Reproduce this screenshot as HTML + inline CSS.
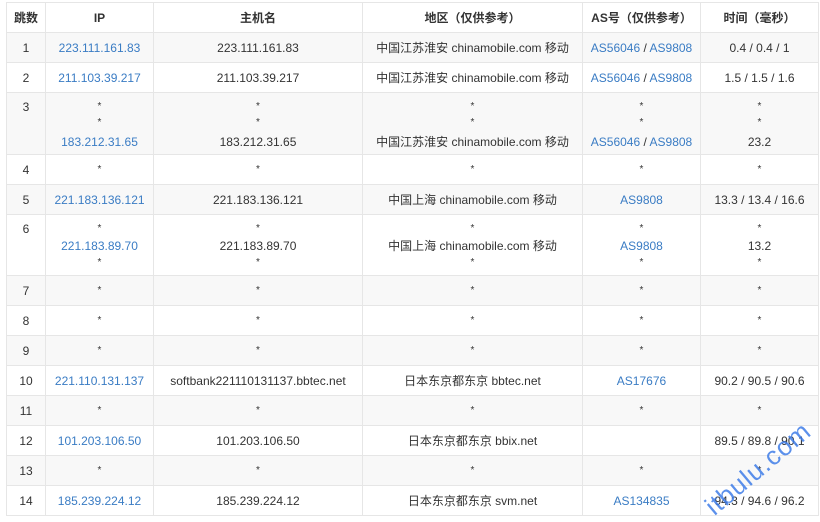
<!DOCTYPE html>
<html><head><meta charset="utf-8">
<style>
body{margin:0;background:#fff;width:820px;height:521px;overflow:hidden;position:relative;font-family:"Liberation Sans","Noto Sans CJK SC",sans-serif;}
table{position:absolute;left:6px;top:2px;border-collapse:collapse;font-size:12px;color:#333;table-layout:fixed;}
td,th{border:1px solid #e6e6e6;text-align:center;padding:0;height:29px;}
th{font-weight:bold;height:29px;}
tr:nth-child(even) td{background:#f8f8f8;}
a{color:#3a7cc4;text-decoration:none;}
.m td{vertical-align:top;padding-top:6px;}
.m td div{height:16px;line-height:16px;}
.m td div.t{height:18px;line-height:18px;}
.r3 td div.t{height:22px;line-height:22px;}
.s{font-size:10px;}
.wm{position:absolute;left:699px;top:498px;font-size:26px;color:#3f7de8;opacity:.85;transform:rotate(-40deg);transform-origin:left top;white-space:nowrap;letter-spacing:1px;}
</style></head><body>
<table>
<colgroup><col style="width:39px"><col style="width:108px"><col style="width:209px"><col style="width:220px"><col style="width:118px"><col style="width:118px"></colgroup>
<tr><th>跳数</th><th>IP</th><th>主机名</th><th>地区（仅供参考）</th><th>AS号（仅供参考）</th><th>时间（毫秒）</th></tr>
<tr><td>1</td><td><a>223.111.161.83</a></td><td>223.111.161.83</td><td>中国江苏淮安 chinamobile.com 移动</td><td><a>AS56046</a> / <a>AS9808</a></td><td>0.4 / 0.4 / 1</td></tr>
<tr><td>2</td><td><a>211.103.39.217</a></td><td>211.103.39.217</td><td>中国江苏淮安 chinamobile.com 移动</td><td><a>AS56046</a> / <a>AS9808</a></td><td>1.5 / 1.5 / 1.6</td></tr>
<tr class="m r3" style="height:62px"><td><div>3</div></td><td><div class="s">*</div><div class="s">*</div><div class="t"><a>183.212.31.65</a></div></td><td><div class="s">*</div><div class="s">*</div><div class="t">183.212.31.65</div></td><td><div class="s">*</div><div class="s">*</div><div class="t">中国江苏淮安 chinamobile.com 移动</div></td><td><div class="s">*</div><div class="s">*</div><div class="t"><a>AS56046</a> / <a>AS9808</a></div></td><td><div class="s">*</div><div class="s">*</div><div class="t">23.2</div></td></tr>
<tr><td>4</td><td class="s">*</td><td class="s">*</td><td class="s">*</td><td class="s">*</td><td class="s">*</td></tr>
<tr><td>5</td><td><a>221.183.136.121</a></td><td>221.183.136.121</td><td>中国上海 chinamobile.com 移动</td><td><a>AS9808</a></td><td>13.3 / 13.4 / 16.6</td></tr>
<tr class="m" style="height:61px"><td><div>6</div></td><td><div class="s">*</div><div class="t"><a>221.183.89.70</a></div><div class="s">*</div></td><td><div class="s">*</div><div class="t">221.183.89.70</div><div class="s">*</div></td><td><div class="s">*</div><div class="t">中国上海 chinamobile.com 移动</div><div class="s">*</div></td><td><div class="s">*</div><div class="t"><a>AS9808</a></div><div class="s">*</div></td><td><div class="s">*</div><div class="t">13.2</div><div class="s">*</div></td></tr>
<tr><td>7</td><td class="s">*</td><td class="s">*</td><td class="s">*</td><td class="s">*</td><td class="s">*</td></tr>
<tr><td>8</td><td class="s">*</td><td class="s">*</td><td class="s">*</td><td class="s">*</td><td class="s">*</td></tr>
<tr><td>9</td><td class="s">*</td><td class="s">*</td><td class="s">*</td><td class="s">*</td><td class="s">*</td></tr>
<tr><td>10</td><td><a>221.110.131.137</a></td><td>softbank221110131137.bbtec.net</td><td>日本东京都东京 bbtec.net</td><td><a>AS17676</a></td><td>90.2 / 90.5 / 90.6</td></tr>
<tr><td>11</td><td class="s">*</td><td class="s">*</td><td class="s">*</td><td class="s">*</td><td class="s">*</td></tr>
<tr><td>12</td><td><a>101.203.106.50</a></td><td>101.203.106.50</td><td>日本东京都东京 bbix.net</td><td></td><td>89.5 / 89.8 / 90.1</td></tr>
<tr><td>13</td><td class="s">*</td><td class="s">*</td><td class="s">*</td><td class="s">*</td><td class="s">*</td></tr>
<tr><td>14</td><td><a>185.239.224.12</a></td><td>185.239.224.12</td><td>日本东京都东京 svm.net</td><td><a>AS134835</a></td><td>94.3 / 94.6 / 96.2</td></tr>
</table>
<div class="wm">itbulu.com</div>
</body></html>
